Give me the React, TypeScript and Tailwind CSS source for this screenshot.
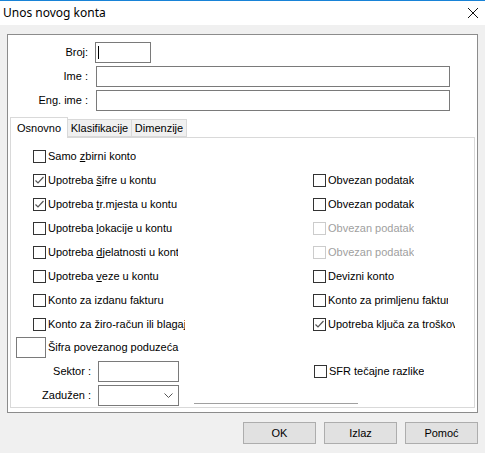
import React from "react"

const ui = { fontFamily: '"Liberation Sans", Arial, sans-serif' }

function Check({ checked, disabled }: { checked?: boolean; disabled?: boolean }) {
  return (
    <span
      className={`flex h-[13px] w-[13px] shrink-0 items-center justify-center border bg-white ${
        disabled ? "border-[#cccccc]" : "border-[#333333]"
      }`}
    >
      {checked && (
        <svg width="11" height="11" viewBox="0 0 11 11">
          <polyline points="1.5,5.5 4,8 9.5,2" fill="none" stroke="#555555" strokeWidth="1.2" />
        </svg>
      )}
    </span>
  )
}

function CheckItem({
  label,
  checked,
  disabled,
  w = "w-[200px]",
}: {
  label: React.ReactNode
  checked?: boolean
  disabled?: boolean
  w?: string
}) {
  return (
    <div className={`flex h-[24px] items-center gap-[2px] overflow-hidden whitespace-nowrap ${w}`}>
      <Check checked={checked} disabled={disabled} />
      <span className={`overflow-hidden ${disabled ? "text-[#a0a0a0]" : "text-black"}`}>{label}</span>
    </div>
  )
}

function Row({ left, right }: { left: React.ReactNode; right?: React.ReactNode }) {
  return (
    <div className="flex h-[24px]">
      <div className="w-[280px]">{left}</div>
      <div>{right}</div>
    </div>
  )
}

function Field({ label, width }: { label: string; width: string }) {
  return (
    <div className="flex h-[21px] items-center">
      <div className="w-[80px] pr-[0px] text-right">{label}</div>
      <div className={`ml-[8px] h-[21px] border border-[#7a7a7a] bg-white ${width}`} />
    </div>
  )
}

export default function App() {
  return (
    <div className="h-[453px] w-[485px] overflow-hidden bg-[#f0f0f0] text-[11px] text-black" style={ui}>
      {/* title bar */}
      <div className="flex h-[25px] items-center justify-between border-t border-[#1883d7] bg-white pl-[3px] pr-[6px]">
        <span className="text-[12px]" style={{ fontFamily: '"Noto Sans", sans-serif' }}>
          Unos novog konta
        </span>
        <svg width="12" height="12" viewBox="0 0 12 12">
          <path d="M1 1 L11 11 M11 1 L1 11" stroke="#111111" strokeWidth="1" />
        </svg>
      </div>

      <div className="px-[7px] pt-[9px]">
        <div className="h-[379px] border border-[#8c8c8c] bg-white">
          {/* header fields */}
          <div className="flex flex-col gap-[3px] pt-[7px]">
            <div className="flex h-[21px] items-center">
              <div className="w-[80px] text-right">Broj:</div>
              <div className="ml-[7px] flex h-[21px] w-[56px] items-center border border-[#7a7a7a] bg-white pl-[2px]">
                <span className="h-[13px] w-[1px] bg-black" />
              </div>
            </div>
            <Field label="Ime :" width="w-[354px]" />
            <Field label="Eng. ime :" width="w-[354px]" />
          </div>

          {/* tabs */}
          <div className="ml-[2px] mr-[2px] mt-[6px]">
            <div className="flex items-end">
              <div className="relative z-10 -mb-px flex h-[21px] w-[58px] items-center justify-center border border-b-0 border-[#d9d9d9] bg-white">
                Osnovno
              </div>
              <div className="flex h-[18px] w-[64px] items-center justify-center border border-l-0 border-[#d9d9d9] bg-[#f0f0f0]">
                Klasifikacije
              </div>
              <div className="flex h-[18px] w-[55px] items-center justify-center border border-l-0 border-[#d9d9d9] bg-[#f0f0f0]">
                Dimenzije
              </div>
            </div>
            <div className="h-[271px] border border-[#d9d9d9] bg-white pt-[6px]">
              <div className="pl-[22px]">
                <Row left={<CheckItem label={<>Samo <u>z</u>birni konto</>} />} />
                <Row
                  left={<CheckItem checked label={<>Upotreba <u>š</u>ifre u kontu</>} />}
                  right={<CheckItem label="Obvezan podatak" w="w-[140px]" />}
                />
                <Row
                  left={<CheckItem checked label={<>Upotreba <u>t</u>r.mjesta u kontu</>} />}
                  right={<CheckItem label="Obvezan podatak" w="w-[140px]" />}
                />
                <Row
                  left={<CheckItem label={<>Upotreba <u>l</u>okacije u kontu</>} />}
                  right={<CheckItem disabled label="Obvezan podatak" w="w-[140px]" />}
                />
                <Row
                  left={<CheckItem w="w-[145px]" label={<>Upotreba <u>d</u>jelatnosti u kontu</>} />}
                  right={<CheckItem disabled label="Obvezan podatak" w="w-[140px]" />}
                />
                <Row
                  left={<CheckItem label={<>Upotreba <u>v</u>eze u kontu</>} />}
                  right={<CheckItem label="Devizni konto" w="w-[140px]" />}
                />
                <Row
                  left={<CheckItem label="Konto za izdanu fakturu" />}
                  right={<CheckItem label="Konto za primljenu fakturu" w="w-[135px]" />}
                />
                <Row
                  left={<CheckItem w="w-[152px]" label="Konto za žiro-račun ili blagajnu" />}
                  right={<CheckItem checked label="Upotreba ključa za troškove" w="w-[142px]" />}
                />
              </div>

              {/* šifra povezanog */}
              <div className="mt-[1px] flex h-[21px] items-center pl-[5px]">
                <div className="h-[21px] w-[30px] border border-[#7a7a7a] bg-white" />
                <span className="ml-[2px]">Šifra povezanog poduzeća</span>
              </div>

              <div className="mt-[3px] flex h-[21px] items-center">
                <div className="w-[80px] text-right">Sektor :</div>
                <div className="ml-[7px] h-[21px] w-[81px] border border-[#7a7a7a] bg-white" />
                <div className="ml-[135px]">
                  <CheckItem label="SFR tečajne razlike" w="w-[140px]" />
                </div>
              </div>

              <div className="mt-[3px] flex h-[21px] items-center">
                <div className="w-[80px] text-right">Zadužen :</div>
                <div className="ml-[7px] flex h-[21px] w-[81px] items-center justify-end border border-[#7a7a7a] bg-white pr-[5px]">
                  <svg width="9" height="6" viewBox="0 0 9 6">
                    <polyline points="0.5,0.5 4.5,4.5 8.5,0.5" fill="none" stroke="#555555" strokeWidth="1" />
                  </svg>
                </div>
                <div className="ml-[15px] mt-[16px] h-px w-[164px] bg-[#a0a0a0]" />
              </div>
            </div>
          </div>
        </div>

        {/* buttons */}
        <div className="mt-[9px] flex justify-end gap-[8px]">
          {["OK", "Izlaz", "Pomoć"].map((b) => (
            <button
              key={b}
              className="flex h-[22px] w-[73px] items-center justify-center border border-[#adadad] bg-[#e1e1e1]"
            >
              {b}
            </button>
          ))}
        </div>
      </div>
    </div>
  )
}
